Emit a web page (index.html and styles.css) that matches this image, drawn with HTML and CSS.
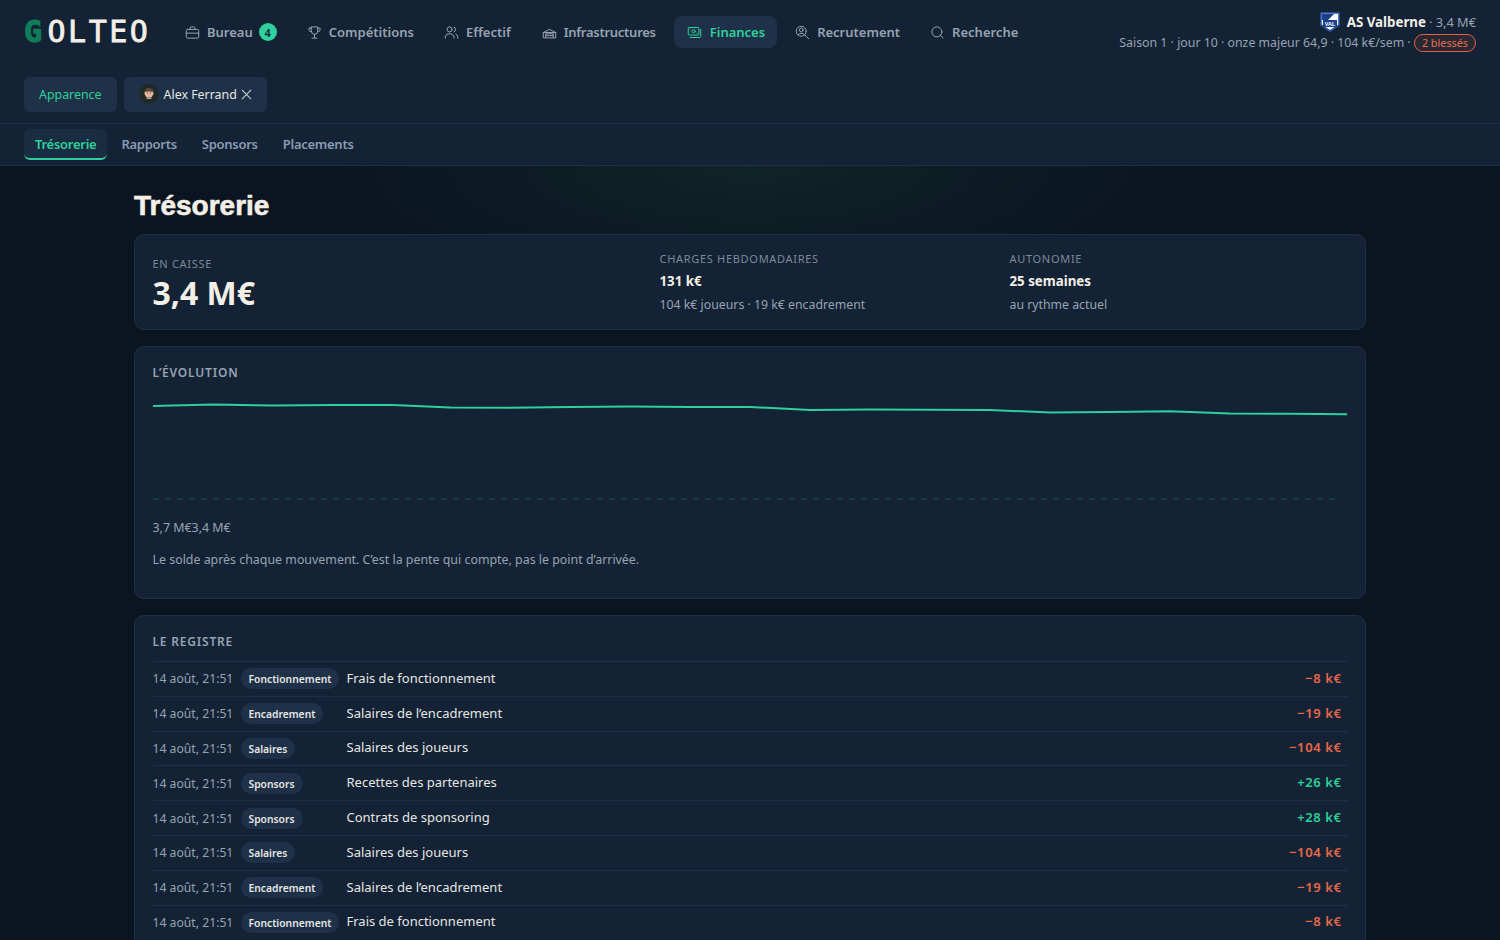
FILE: index.html
```html
<!DOCTYPE html>
<html lang="fr">
<head>
    <meta charset="UTF-8">
    <meta name="viewport" content="width=device-width, initial-scale=1.0">
    <title>Golteo - Trésorerie</title>
    <link rel="stylesheet" href="styles.css">
</head>
<body>
    <header class="topbar">
        <div class="topbar-main">
            <div class="logo"><span class="logo-g">G</span>OLTEO</div>
            <nav class="nav">
                <a class="nav-item">
                    <svg class="nav-icon" viewBox="0 0 24 24"><rect x="2" y="7" width="20" height="14" rx="2"/><path d="M16 7V5a2 2 0 0 0-2-2h-4a2 2 0 0 0-2 2v2"/><path d="M2 13h20"/></svg>
                    Bureau <span class="badge">4</span>
                </a>
                <a class="nav-item">
                    <svg class="nav-icon" viewBox="0 0 24 24"><path d="M7 3h10v7a5 5 0 0 1-10 0z"/><path d="M7 5H3v2a4 4 0 0 0 4 4"/><path d="M17 5h4v2a4 4 0 0 1-4 4"/><path d="M12 15v5"/><path d="M8 21h8"/></svg>
                    Compétitions
                </a>
                <a class="nav-item">
                    <svg class="nav-icon" viewBox="0 0 24 24"><circle cx="9" cy="7" r="4"/><path d="M2 21v-2a6 6 0 0 1 6-5h2a6 6 0 0 1 6 5v2"/><path d="M16 3.200a4 4 0 0 1 0 7.600"/><path d="M22 21v-2a5 5 0 0 0-3-4.500"/></svg>
                    Effectif
                </a>
                <a class="nav-item nav-item-tight">
                    <svg class="nav-icon" viewBox="0 0 24 24"><path d="M2 20v-8l10-5 10 5v8z"/><path d="M6 20v-6h12v6"/><path d="M6 17h12"/><path d="M2 12h20"/></svg>
                    Infrastructures
                </a>
                <a class="nav-item active">
                    <svg class="nav-icon" viewBox="0 0 24 24"><rect x="2" y="4" width="17" height="12" rx="1.500"/><circle cx="10.500" cy="10" r="2.600"/><path d="M5 7h.01M16 13h.01"/><path d="M22 7v11a2 2 0 0 1-2 2H5"/></svg>
                    Finances
                </a>
                <a class="nav-item">
                    <svg class="nav-icon" viewBox="0 0 24 24"><circle cx="10" cy="10" r="8"/><circle cx="10" cy="8" r="3"/><path d="M5 15.500a6 6 0 0 1 10 0"/><path d="M16 16l6 6"/></svg>
                    Recrutement
                </a>
                <a class="nav-item">
                    <svg class="nav-icon" viewBox="0 0 24 24"><circle cx="11" cy="11" r="8"/><path d="M21 21l-4.600-4.600"/></svg>
                    Recherche
                </a>
            </nav>
            <div class="club">
                <div class="club-line">
                    <svg class="club-crest" viewBox="0 0 20 20">
                        <path d="M1 1h18v12l-9 6-9-6z" fill="#fff" stroke="#2c55a8" stroke-width="1.600"/>
                        <path d="M2 2h12L8 8H2z" fill="#1c3f8a"/>
                        <rect x="3" y="8" width="14" height="7" fill="#1c3f8a"/>
                        <text x="10" y="14" class="crest-text">VAL</text>
                    </svg>
                    <strong>AS Valberne</strong> · 3,4 M€
                </div>
                <div class="club-line-sub">
                    Saison 1 · jour 10 · onze majeur 64,9 · 104 k€/sem · <span class="injury">2 blessés</span>
                </div>
            </div>
        </div>
        <div class="topbar-actions">
            <button class="btn btn-accent">Apparence</button>
            <button class="btn">
                <svg class="avatar" viewBox="0 0 20 20">
                    <circle cx="10" cy="10" r="10" fill="#1f2a28"/>
                    <circle cx="10" cy="9" r="4.500" fill="#e3b79c"/>
                    <path d="M5.500 8.500a4.500 4.500 0 0 1 9 0c-2-1.400-7-1.400-9 0z" fill="#5a4334"/>
                    <path d="M7.500 13.500h5v1.500h-5z" fill="#c9a189"/>
                    <path d="M8.300 9h.8M10.900 9h.8" stroke="#2b2018" stroke-width="1"/>
                </svg>
                Alex Ferrand
                <svg class="close" viewBox="0 0 12 12"><path d="M1 1l10 10M11 1L1 11"/></svg>
            </button>
        </div>
    </header>

    <div class="tabs">
        <a class="tab active">Trésorerie</a>
        <a class="tab">Rapports</a>
        <a class="tab">Sponsors</a>
        <a class="tab">Placements</a>
    </div>

    <main class="page">
        <h1 class="page-title">Trésorerie</h1>

        <section class="card stats">
            <div class="stat-main">
                <div class="label">EN CAISSE</div>
                <div class="big-value">3,4 M€</div>
            </div>
            <div>
                <div class="label">CHARGES HEBDOMADAIRES</div>
                <div class="value">131 k€</div>
                <div class="hint">104 k€ joueurs · 19 k€ encadrement</div>
            </div>
            <div>
                <div class="label">AUTONOMIE</div>
                <div class="value">25 semaines</div>
                <div class="hint">au rythme actuel</div>
            </div>
        </section>

        <section class="card chart-card">
            <h2 class="card-title">L’ÉVOLUTION</h2>
            <svg class="chart" viewBox="0 0 1195 133">
                <path class="chart-base" d="M0 113H1189"/>
                <path class="chart-line" d="M0 20L60 18.500L120 19.500L180 19L240 19L297 21.500L357 21.700L417 21L477 20.500L537 21L597 21L657 24L717 23.500L777 23.700L837 24L897 26.500L957 26L1017 25.300L1077 27.500L1137 27.800L1194 28.300"/>
            </svg>
            <div class="chart-legend">3,7 M€3,4 M€</div>
            <p class="chart-note">Le solde après chaque mouvement. C’est la pente qui compte, pas le point d’arrivée.</p>
        </section>

        <section class="card ledger">
            <h2 class="card-title">LE REGISTRE</h2>
            <div class="row">
                <span class="date">14 août, 21:51</span>
                <span class="pill">Fonctionnement</span>
                <span class="desc">Frais de fonctionnement</span>
                <span class="amount neg">−8 k€</span>
            </div>
            <div class="row">
                <span class="date">14 août, 21:51</span>
                <span class="pill">Encadrement</span>
                <span class="desc">Salaires de l’encadrement</span>
                <span class="amount neg">−19 k€</span>
            </div>
            <div class="row">
                <span class="date">14 août, 21:51</span>
                <span class="pill">Salaires</span>
                <span class="desc">Salaires des joueurs</span>
                <span class="amount neg">−104 k€</span>
            </div>
            <div class="row">
                <span class="date">14 août, 21:51</span>
                <span class="pill">Sponsors</span>
                <span class="desc">Recettes des partenaires</span>
                <span class="amount pos">+26 k€</span>
            </div>
            <div class="row">
                <span class="date">14 août, 21:51</span>
                <span class="pill">Sponsors</span>
                <span class="desc">Contrats de sponsoring</span>
                <span class="amount pos">+28 k€</span>
            </div>
            <div class="row">
                <span class="date">14 août, 21:51</span>
                <span class="pill">Salaires</span>
                <span class="desc">Salaires des joueurs</span>
                <span class="amount neg">−104 k€</span>
            </div>
            <div class="row">
                <span class="date">14 août, 21:51</span>
                <span class="pill">Encadrement</span>
                <span class="desc">Salaires de l’encadrement</span>
                <span class="amount neg">−19 k€</span>
            </div>
            <div class="row">
                <span class="date">14 août, 21:51</span>
                <span class="pill">Fonctionnement</span>
                <span class="desc">Frais de fonctionnement</span>
                <span class="amount neg">−8 k€</span>
            </div>
        </section>
    </main>
</body>
</html>
```

FILE: styles.css
```css
html {
    overflow: hidden;
}

body {
    margin: 0;
    height: 940px;
    overflow: hidden;
    background:
        radial-gradient(ellipse 420px 130px at 50% 166px, rgba(30, 90, 70, 0.22), transparent),
        #0b1520;
    color: #f3efe6;
    font-family: "Noto Sans", "Open Sans", sans-serif;
    font-size: 13px;
}

/* Header */
.topbar {
    background: #132235;
    border-bottom: 1px solid #1e3047;
    height: 124px;
    box-sizing: border-box;
    padding: 0 24px;
}

.topbar-main {
    display: flex;
    align-items: flex-start;
    height: 77px;
}

.logo {
    width: 149px;
    margin-top: 16px;
    font-family: "DejaVu Sans Mono", monospace;
    font-size: 30px;
    line-height: 32px;
    letter-spacing: 2.500px;
    color: #f3efe6;
    -webkit-text-stroke: 0.8px #f3efe6;
}

.logo-g {
    margin-right: 3px;
    color: #0f7d58;
    font-weight: 700;
    -webkit-text-stroke: 1.200px #0f7d58;
}

.nav {
    display: flex;
    gap: 6px;
    margin-top: 16px;
}

.nav-item {
    display: flex;
    align-items: center;
    gap: 7px;
    height: 32px;
    padding: 0 12px;
    border-radius: 8px;
    color: #97a3b1;
    font-size: 13px;
    font-weight: 600;
}

.nav-item-tight {
    margin-left: 1px;
    letter-spacing: -0.27px;
}

.nav-item.active {
    gap: 8px;
    padding-left: 13px;
    background: #1e3148;
    color: #2fd09b;
}

.nav-icon {
    width: 15px;
    height: 15px;
    fill: none;
    stroke: currentColor;
    stroke-width: 1.600;
    stroke-linecap: round;
    stroke-linejoin: round;
}

.badge {
    display: flex;
    align-items: center;
    justify-content: center;
    width: 18px;
    height: 18px;
    margin-left: -1px;
    border-radius: 50%;
    background: #2fd09b;
    color: #10202f;
    font-size: 11px;
    font-weight: 600;
}

.club {
    margin-left: auto;
    margin-top: 11px;
    text-align: right;
    color: #97a3b1;
    font-size: 12.330px;
}

.club-line {
    display: flex;
    justify-content: flex-end;
    align-items: center;
    gap: 3px;
    height: 22px;
    font-size: 12.800px;
}

.club-line strong {
    color: #f3efe6;
    font-weight: 700;
    font-size: 13.300px;
    margin-left: 4px;
}

.club-crest {
    width: 20px;
    height: 20px;
}

.crest-text {
    font-family: "Liberation Sans", sans-serif;
    font-size: 5.500px;
    font-weight: 700;
    fill: #fff;
    text-anchor: middle;
}

.club-line-sub {
    height: 20px;
    line-height: 20px;
}

.injury {
    display: inline-block;
    height: 18px;
    line-height: 16px;
    box-sizing: border-box;
    padding: 0 7px;
    border: 1px solid #e5603f;
    border-radius: 9px;
    background: rgba(229, 96, 63, 0.1);
    color: #ec6b4b;
    font-size: 10.800px;
}

.topbar-actions {
    display: flex;
    gap: 7px;
}

.btn {
    display: flex;
    align-items: center;
    height: 35px;
    padding: 0 15px 1px;
    border: none;
    border-radius: 6px;
    background: #1e3148;
    color: #e6e6e2;
    font-family: inherit;
    font-size: 12.400px;
}

.btn-accent {
    color: #2fd09b;
}

.avatar {
    width: 20px;
    height: 20px;
    margin-right: 5px;
}

.close {
    width: 11px;
    height: 11px;
    margin-left: 4px;
    fill: none;
    stroke: #c8ccd0;
    stroke-width: 1.200;
}

/* Tabs */
.tabs {
    display: flex;
    align-items: flex-start;
    gap: 3px;
    height: 42px;
    box-sizing: border-box;
    padding: 5px 24px 0;
    background: #132235;
    border-bottom: 1px solid #1e3047;
}

.tab {
    padding: 0 11px;
    height: 31px;
    line-height: 31px;
    box-sizing: border-box;
    border-bottom: 2px solid transparent;
    border-radius: 6px;
    color: #8b9bb2;
    font-size: 13px;
    font-weight: 600;
    letter-spacing: -0.27px;
}

.tab.active {
    background: #1a2c42;
    border-bottom-color: #2fd09b;
    color: #2fd09b;
}

/* Content */
.page {
    width: 1232px;
    margin: 0 auto;
}

.page-title {
    margin: 0;
    padding-top: 22px;
    height: 46px;
    font-family: "Liberation Sans", sans-serif;
    font-size: 28px;
    font-weight: 700;
    line-height: 36px;
    -webkit-text-stroke: 0.6px #f3efe6;
    color: #f3efe6;
}

.card {
    margin-top: 16px;
    box-sizing: border-box;
    padding: 18px 17.500px;
    background: #132235;
    border: 1px solid #1e3047;
    border-radius: 10px;
}

.page-title + .card {
    margin-top: 0;
}

.stats {
    display: grid;
    grid-template-columns: 495px 338px 338px;
    gap: 12px;
    height: 96px;
    padding-top: 16px;
}

.stat-main {
    padding-top: 5px;
}

.label {
    color: #7f8a97;
    font-size: 11px;
    letter-spacing: 0.7px;
    line-height: 16px;
}

.big-value {
    margin-top: 1px;
    font-size: 32px;
    font-weight: 700;
    line-height: 40px;
    color: #f3efe6;
}

.value {
    margin-top: 4px;
    font-size: 13.300px;
    font-weight: 700;
    line-height: 20px;
}

.hint {
    margin-top: 5px;
    color: #97a3b1;
    font-size: 12.300px;
    line-height: 18px;
}

.card-title {
    margin: 0;
    color: #97a3b1;
    font-size: 12px;
    font-weight: 600;
    letter-spacing: 0.8px;
    line-height: 16px;
}

.chart-card {
    height: 253px;
}

.chart {
    display: block;
    width: 1195px;
    height: 133px;
    margin-top: 5px;
    fill: none;
}

.chart-line {
    stroke: #2fd09b;
    stroke-width: 2;
}

.chart-base {
    stroke: rgba(47, 208, 155, 0.3);
    stroke-width: 1;
    stroke-dasharray: 6 6;
}

.chart-legend {
    color: #97a3b1;
    font-size: 12.400px;
    line-height: 18px;
}

.chart-note {
    margin: 14px 0 0;
    color: #97a3b1;
    font-size: 12.400px;
    line-height: 18px;
}

/* Register */
.ledger .card-title {
    margin-bottom: 11px;
}

.row {
    display: grid;
    grid-template-columns: 80px 98px 1fr auto;
    gap: 8px;
    align-items: center;
    height: 34.800px;
    box-sizing: border-box;
    padding-right: 6px;
    border-top: 1px solid #1e3047;
}

.date {
    color: #97a3b1;
    font-size: 12.200px;
    white-space: nowrap;
}

.pill {
    justify-self: start;
    padding: 0 8px;
    height: 21px;
    line-height: 23px;
    border-radius: 11px;
    background: #1e3148;
    color: #e6e6e2;
    font-size: 10.300px;
    font-weight: 600;
    white-space: nowrap;
}

.desc {
    padding-bottom: 2px;
    color: #e6e6e2;
    font-size: 13px;
}

.amount {
    padding-bottom: 2px;
    font-size: 13px;
    font-weight: 600;
    letter-spacing: 0.6px;
}

.neg {
    color: #e8694a;
}

.pos {
    color: #2fd09b;
}
```
